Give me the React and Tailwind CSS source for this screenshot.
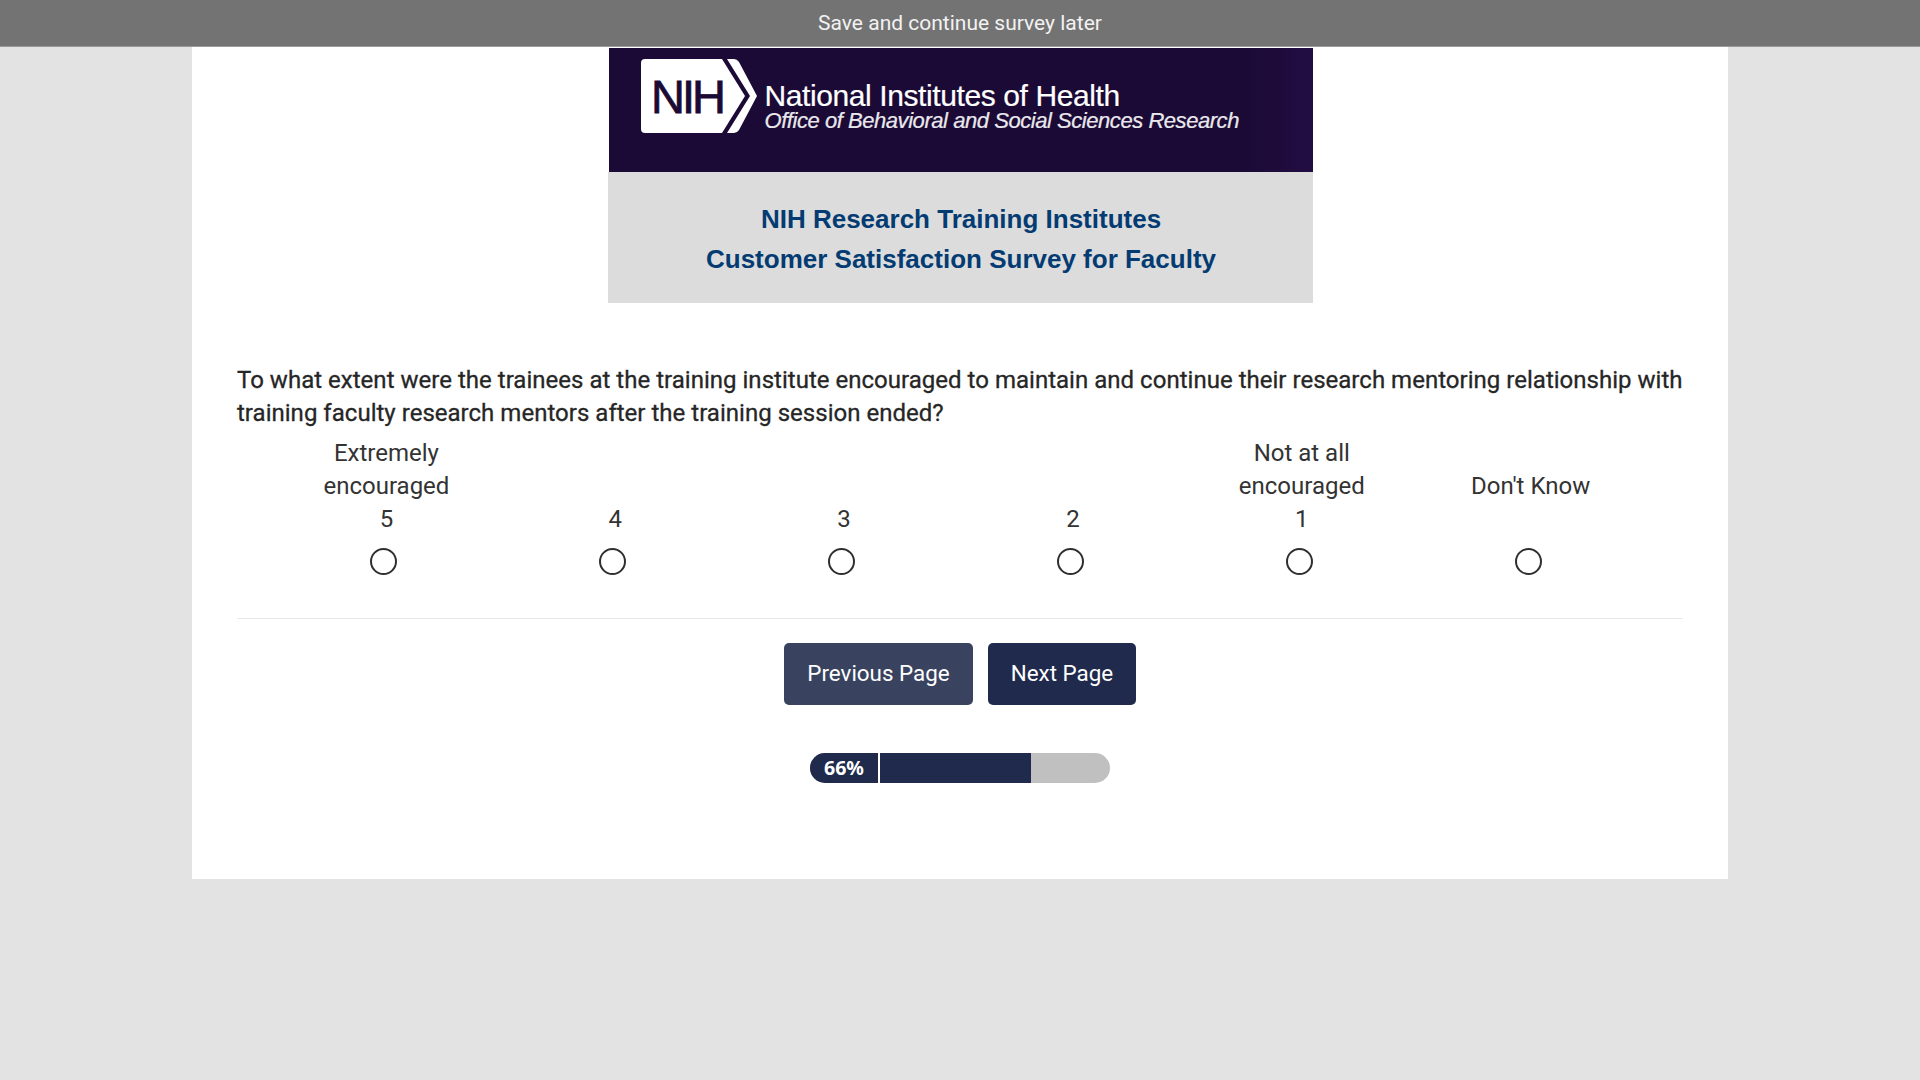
const OPTIONS = [
  { label: ['Extremely', 'encouraged'], value: '5' },
  { label: [], value: '4' },
  { label: [], value: '3' },
  { label: [], value: '2' },
  { label: ['Not at all', 'encouraged'], value: '1' },
  { label: ["Don't Know"], value: '' },
]

function NihLogo() {
  return (
    <svg width="118" height="74" viewBox="0 0 118 74" className="shrink-0">
      <path d="M4 0H81L104 37L81 74H4Q0 74 0 70V4Q0 0 4 0Z" fill="#fff" />
      <path d="M86 0H93Q96 0 98 3L116 37L98 71Q96 74 93 74H86L109 37Z" fill="#fff" />
      <text
        x="10"
        y="54"
        fill="#1b0a35"
        stroke="#1b0a35"
        strokeWidth="0.8"
        fontSize="47"
        fontFamily="'Liberation Sans', sans-serif"
        letterSpacing="-3"
      >
        NIH
      </text>
    </svg>
  )
}

export default function App() {
  return (
    <div className="min-h-screen bg-[#e3e3e3] font-['Roboto',sans-serif] text-[#2b2b2b]">
      <div className="h-[47px] pt-[2px] bg-[#737373] border-b border-[#9a9a9a] flex items-center justify-center text-[21px] text-[#f2f2f2]">
        Save and continue survey later
      </div>

      <div className="w-[1536px] h-[832px] mx-auto bg-white px-[45px] pt-px">
        {/* Banner */}
        <div className="w-[705px] mx-auto font-['Liberation_Sans',sans-serif]">
          <div className="ml-px h-[124px] bg-gradient-to-r from-[#1b0a35] from-90% to-[#220d42] flex items-start gap-[6px] pl-[32px] pt-[11px]">
            <NihLogo />
            <div className="pt-[22px] text-white [-webkit-text-stroke:0.2px_#fff]">
              <p className="text-[30px] leading-[30px] tracking-[-0.4px]">National Institutes of Health</p>
              <p className="text-[22px] leading-[19px] italic tracking-[-0.45px] text-[#e8e6ec]">
                Office of Behavioral and Social Sciences Research
              </p>
            </div>
          </div>
          <div className="h-[131px] bg-[#dcdcdc] pt-[27px] pl-[2px] text-center text-[26px] leading-[40px] font-bold text-[#033b72]">
            <p>NIH Research Training Institutes</p>
            <p>Customer Satisfaction Survey for Faculty</p>
          </div>
        </div>

        {/* Question */}
        <p className="mt-[61px] text-[24px] leading-[33px] tracking-[0.02px] text-[#262626] [-webkit-text-stroke:0.3px_#262626]">
          To what extent were the trainees at the training institute encouraged to maintain and continue their research mentoring relationship with training faculty research mentors after the training session ended?
        </p>

        <div className="mt-[7px] pl-[35px] pr-[38px] grid grid-cols-6 text-[24px] leading-[33px] text-center text-[#333]">
          {OPTIONS.map((o, i) => (
            <div key={i} className="flex flex-col items-center">
              <div className="h-[99px] flex flex-col justify-end">
                {o.label.map((line) => (
                  <p key={line}>{line}</p>
                ))}
                {o.value && <p>{o.value}</p>}
                {!o.value && <div className="h-[33px]" />}
              </div>
              <div className="mt-[12px] mr-[5px] w-[27px] h-[27px] rounded-full border-2 border-[#2f2f2f]" />
            </div>
          ))}
        </div>

        <div className="mt-[43px] border-t border-[#e8e8e8]" />

        {/* Buttons */}
        <div className="mt-[24px] flex justify-center gap-[15px] text-[22.4px] text-white">
          <button className="w-[189px] h-[62px] rounded-[5px] bg-[#394360]">Previous Page</button>
          <button className="w-[148px] h-[62px] rounded-[5px] bg-[#1f2a4d]">Next Page</button>
        </div>

        {/* Progress */}
        <div className="mt-[48px] mx-auto w-[300px] h-[30px] rounded-full bg-[#c0c0c0] overflow-hidden flex">
          <div className="w-[70px] bg-[#1f2a4d] border-r-[2px] border-white flex items-center justify-center font-['Noto_Sans',sans-serif] font-bold text-[19.5px] text-white">
            66%
          </div>
          <div className="w-[151px] bg-[#1f2a4d]" />
        </div>
      </div>
    </div>
  )
}
